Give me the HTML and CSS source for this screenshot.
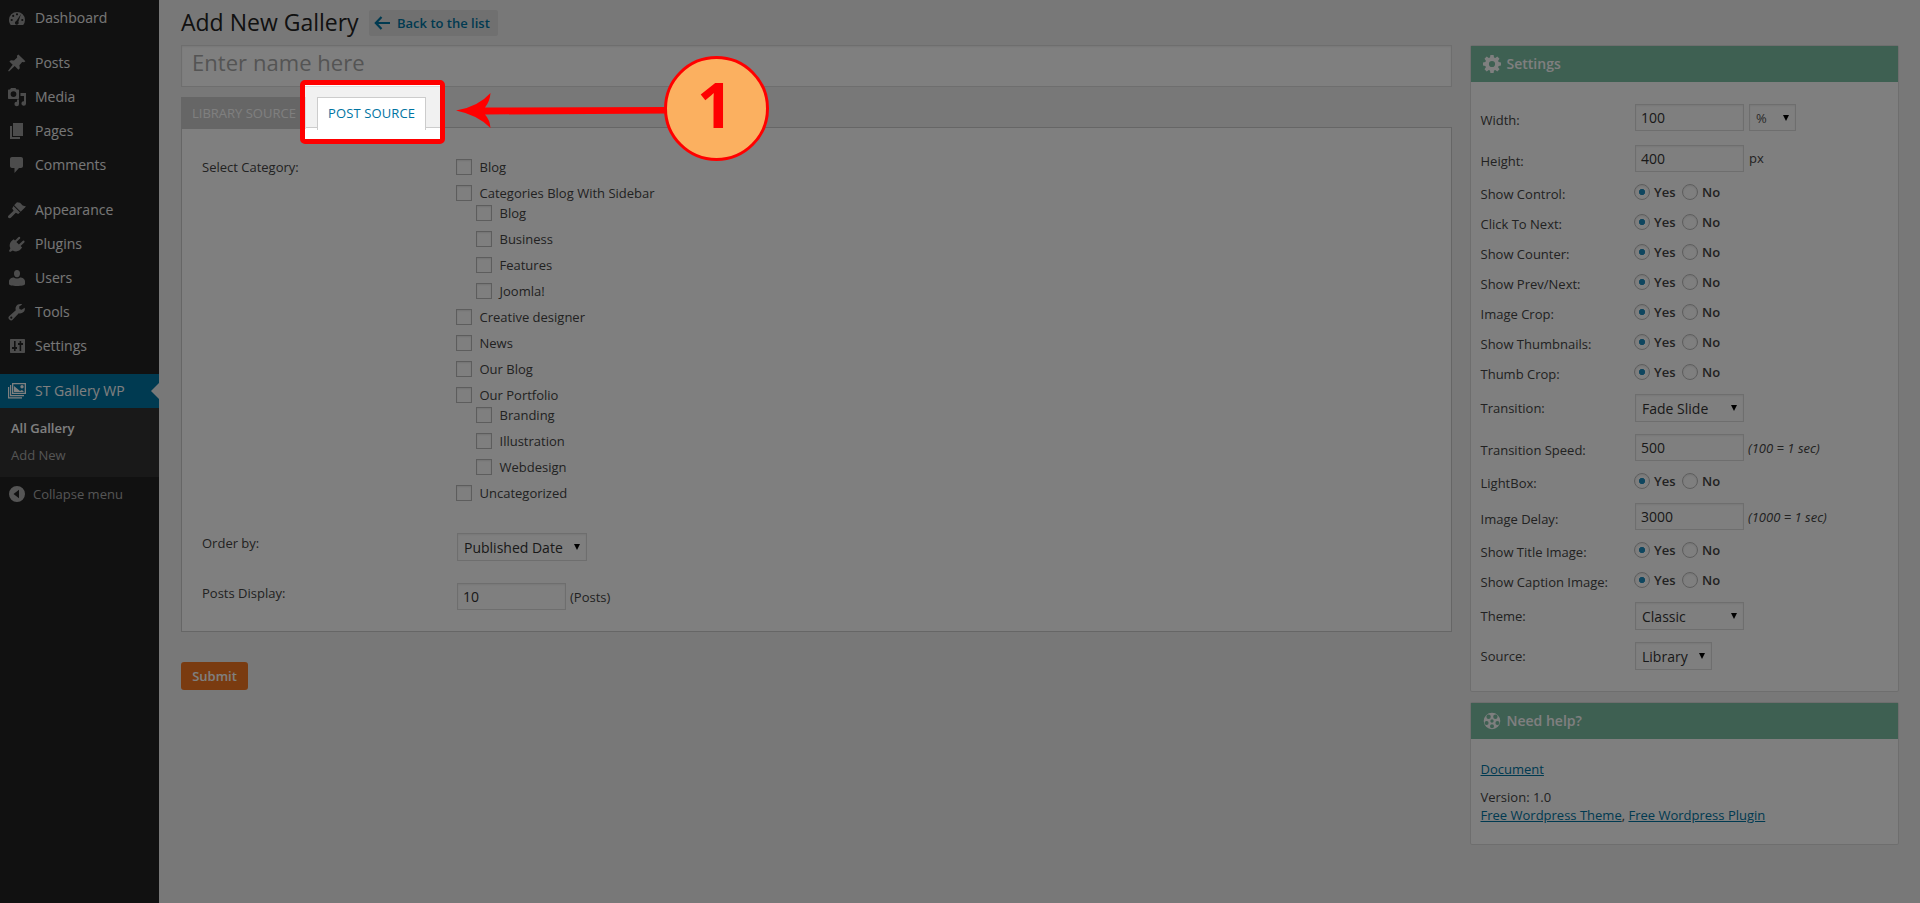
FILE: index.html
```html
<!DOCTYPE html>
<html lang="en">
<head>
<meta charset="utf-8">
<title>Add New Gallery</title>
<link rel="stylesheet" href="styles.css">
</head>
<body>
<div class="app">
  <nav class="menu">
    <a class="item"><svg class="ico" viewBox="0 0 20 20"><path fill-rule="evenodd" d="M3.800 17h12.400A8.200 8.200 0 0 0 18 12a8 8 0 1 0-16 0c0 1.900.7 3.700 1.800 5zM10 5.200a1.100 1.100 0 1 1 0 2.200 1.100 1.100 0 0 1 0-2.200zM6.200 6.800a1.100 1.100 0 1 1 0 2.200 1.100 1.100 0 0 1 0-2.200zM4.700 10.900a1.100 1.100 0 1 1 0 2.200 1.100 1.100 0 0 1 0-2.200zM15.300 10.900a1.100 1.100 0 1 1 0 2.200 1.100 1.100 0 0 1 0-2.200zM14 6l-2.600 7.800a1.900 1.900 0 1 1-2.100-.8z"/></svg>Dashboard</a>
    <a class="item gap"><svg class="ico" viewBox="0 0 20 20"><path d="M11.400 1.600l7 6.600-1.300 1-1.900-.3-2.800 3.300.4 3-1.400 1.500-3.700-3.800L2 18.600l-.9-.9 4.600-5.900-3.300-3.200 1.500-1.400 3.100.4 3.200-3-.3-1.900z"/></svg>Posts</a>
    <a class="item"><svg class="ico" viewBox="0 0 20 20"><path fill-rule="evenodd" d="M4 1h4.500l1 1.500H11c.6 0 1 .4 1 1V11c0 .6-.4 1-1 1H2c-.6 0-1-.4-1-1V3.500c0-.6.400-1 1-1h1zM6.500 4.200a2.900 2.900 0 1 0 0 5.800 2.900 2.900 0 0 0 0-5.800zM13.500 6H19v10.500a2.300 2.300 0 1 1-2-2.300V9h-3.500zM12 12.500v4.500a2.300 2.300 0 1 1-2-2.300v-2.200z"/></svg>Media</a>
    <a class="item"><svg class="ico" viewBox="0 0 20 20"><path d="M6 2h10v13H6zM3 5h2v11h8v2H3z"/></svg>Pages</a>
    <a class="item"><svg class="ico" viewBox="0 0 20 20"><path d="M5 2h9c1.100 0 2 .9 2 2v7c0 1.100-.9 2-2 2h-2l-4.500 5v-5H5c-1.100 0-2-.9-2-2V4c0-1.100.9-2 2-2z"/></svg>Comments</a>
    <a class="item gap"><svg class="ico" viewBox="0 0 20 20"><path d="M8 4.200L10 2.200l3 .6 2.700 2.800L19 6.400l-5.300 5.400-6.500-6.500zM6.500 6l6.500 6.500-1.800 1.400-2.400-1.100-5 5c-.8.700-1.900.6-2.400 0-.6-.7-.5-1.600.2-2.300l5-4.700-1.400-2.300z"/></svg>Appearance</a>
    <a class="item"><svg class="ico" viewBox="0 0 20 20"><path d="M13.100 4.400L9.400 8.100l2.500 2.500 3.700-3.700a1.100 1.100 0 0 1 1.700 1.500l-3.700 3.700 1.500 1.500c-2.700 3.900-6.100 4.700-9.300 2.900L3 18l-1-1 1.400-2.800C1.800 11.200 3 7.600 6.700 5.200l1.300 1.300L11.600 2.900a1.100 1.100 0 0 1 1.500 1.500z"/></svg>Plugins</a>
    <a class="item"><svg class="ico" viewBox="0 0 20 20"><path d="M10 9.300c-2.200 0-3-1.900-3-3.800C7 3.300 8 2 10 2s3 1.300 3 3.500c0 1.900-.8 3.800-3 3.800zM2 16v-2.500C2 11 4.500 9.500 7 9.500c1 1.400 5 1.400 6 0 2.500 0 5 1.500 5 4V16c0 1.300-3.500 2-8 2s-8-.7-8-2z"/></svg>Users</a>
    <a class="item"><svg class="ico" viewBox="0 0 20 20"><path fill-rule="evenodd" d="M17.700 5.700l-3.100 2.100-2.200-.9-.2-2.300 3-2.200c-2.200-1-4.900-.1-6 1.800-.8 1.300-.8 2.700-.4 4L2.600 13.700a2.500 2.500 0 1 0 3.500 3.500l5.700-5.900c1.500.4 3.400.1 4.700-1.200 1.200-1.200 1.700-2.900 1.200-4.400zM4.300 16.800a1.100 1.100 0 1 1 0-2.200 1.100 1.100 0 0 1 0 2.200z"/></svg>Tools</a>
    <a class="item"><svg class="ico" viewBox="0 0 20 20"><path fill-rule="evenodd" d="M4 3h13c.6 0 1 .4 1 1v12c0 .6-.4 1-1 1H4c-.6 0-1-.4-1-1V4c0-.6.4-1 1-1zM7 5v6H5v2h2v2h1.600v-2H10v-2H8.600V5zM12.600 5v2H11v2h1.600v6h1.600V9H16V7h-1.800V5z"/></svg>Settings</a>
    <a class="item gap current"><svg class="ico" viewBox="0 0 20 20"><path fill-rule="evenodd" d="M5 2h14v11H5zM6.300 3.300v8.400h11.400V3.300zM3 4h1.200v10H17v1.200H3zM1 6h1.200v10.300H15v1.200H1z"/><path d="M7 11V5l3 2.500L13 10l2-1 2 2zM15 4a1.700 1.700 0 1 1 0 3.400A1.700 1.700 0 0 1 15 4z"/></svg>ST Gallery WP</a>
    <div class="sub"><a class="on">All Gallery</a><a>Add New</a></div>
    <a class="collapse"><svg class="ico" viewBox="0 0 20 20"><path fill-rule="evenodd" d="M10 2a8 8 0 1 1 0 16 8 8 0 0 1 0-16zM12 5.700L6.500 10l5.500 4.300z"/></svg>Collapse menu</a>
  </nav>

  <main class="page">
    <section class="left">
      <header class="head"><h1>Add New Gallery</h1><a class="back"><svg width="16" height="14" viewBox="0 0 16 14"><path d="M7.500 1L1.800 7l5.700 6M2 7h14" fill="none" stroke="currentColor" stroke-width="2.200"/></svg>Back to the list</a></header>
      <div class="name">Enter name here</div>
      <div class="tabs"><a class="tab">LIBRARY SOURCE</a><a class="tab active">POST SOURCE</a></div>
      <div class="panel">
        <div class="field cats">
          <span class="lab">Select Category:</span>
          <ul>
            <li><i class="cb"></i>Blog</li>
            <li class="parent"><i class="cb"></i>Categories Blog With Sidebar</li>
            <li class="child"><i class="cb"></i>Blog</li>
            <li class="child"><i class="cb"></i>Business</li>
            <li class="child"><i class="cb"></i>Features</li>
            <li class="child"><i class="cb"></i>Joomla!</li>
            <li><i class="cb"></i>Creative designer</li>
            <li><i class="cb"></i>News</li>
            <li><i class="cb"></i>Our Blog</li>
            <li class="parent"><i class="cb"></i>Our Portfolio</li>
            <li class="child"><i class="cb"></i>Branding</li>
            <li class="child"><i class="cb"></i>Illustration</li>
            <li class="child"><i class="cb"></i>Webdesign</li>
            <li><i class="cb"></i>Uncategorized</li>
          </ul>
        </div>
        <div class="field order"><span class="lab">Order by:</span><span class="select w130">Published Date</span></div>
        <div class="field posts"><span class="lab">Posts Display:</span><span class="input">10</span><span class="unit">(Posts)</span></div>
      </div>
      <a class="submit">Submit</a>
    </section>

    <aside class="right">
      <section class="box settings">
        <h2><svg width="18" height="18" viewBox="0 0 18 18"><path fill-rule="evenodd" d="M7.400 0h3.200l.4 2.400 1.300.5 2-1.400 2.200 2.200-1.400 2 .5 1.300 2.400.4v3.200l-2.400.4-.5 1.300 1.400 2-2.200 2.200-2-1.400-1.300.5-.4 2.400H7.400L7 15.600l-1.300-.5-2 1.400-2.200-2.200 1.400-2L2.400 11 0 10.600V7.400L2.400 7l.5-1.300-1.400-2 2.200-2.200 2 1.400L7 2.400zM9 5.900a3.100 3.100 0 1 0 0 6.200 3.100 3.100 0 0 0 0-6.200z"/></svg>Settings</h2>
        <div class="rows">
          <div class="row first"><span class="lab">Width:</span><span class="input">100</span><span class="select pct">%</span></div>
          <div class="row"><span class="lab">Height:</span><span class="input">400</span><span class="unit">px</span></div>
          <div class="row radio"><span class="lab">Show Control:</span><i class="rb on"></i><b>Yes</b><i class="rb"></i><b>No</b></div>
          <div class="row radio"><span class="lab">Click To Next:</span><i class="rb on"></i><b>Yes</b><i class="rb"></i><b>No</b></div>
          <div class="row radio"><span class="lab">Show Counter:</span><i class="rb on"></i><b>Yes</b><i class="rb"></i><b>No</b></div>
          <div class="row radio"><span class="lab">Show Prev/Next:</span><i class="rb on"></i><b>Yes</b><i class="rb"></i><b>No</b></div>
          <div class="row radio"><span class="lab">Image Crop:</span><i class="rb on"></i><b>Yes</b><i class="rb"></i><b>No</b></div>
          <div class="row radio"><span class="lab">Show Thumbnails:</span><i class="rb on"></i><b>Yes</b><i class="rb"></i><b>No</b></div>
          <div class="row radio"><span class="lab">Thumb Crop:</span><i class="rb on"></i><b>Yes</b><i class="rb"></i><b>No</b></div>
          <div class="row sel"><span class="lab">Transition:</span><span class="select w109">Fade Slide</span></div>
          <div class="row"><span class="lab">Transition Speed:</span><span class="input">500</span><em class="unit">(100 = 1 sec)</em></div>
          <div class="row radio"><span class="lab">LightBox:</span><i class="rb on"></i><b>Yes</b><i class="rb"></i><b>No</b></div>
          <div class="row"><span class="lab">Image Delay:</span><span class="input">3000</span><em class="unit">(1000 = 1 sec)</em></div>
          <div class="row radio"><span class="lab">Show Title Image:</span><i class="rb on"></i><b>Yes</b><i class="rb"></i><b>No</b></div>
          <div class="row radio"><span class="lab">Show Caption Image:</span><i class="rb on"></i><b>Yes</b><i class="rb"></i><b>No</b></div>
          <div class="row sel"><span class="lab">Theme:</span><span class="select w109">Classic</span></div>
          <div class="row sel"><span class="lab">Source:</span><span class="select w77">Library</span></div>
        </div>
      </section>
      <section class="box help">
        <h2><svg width="18" height="18" viewBox="0 0 18 18"><path fill-rule="evenodd" d="M9 .7a8.300 8.300 0 1 1 0 16.600A8.300 8.300 0 0 1 9 .7zM9 7.300a1.700 1.700 0 1 0 0 3.400 1.700 1.700 0 0 0 0-3.400zM5.600 2.500a2.200 2.200 0 1 0 0 4.400 2.200 2.200 0 0 0 0-4.400zM12.400 2.500a2.200 2.200 0 1 0 0 4.400 2.200 2.200 0 0 0 0-4.400zM3.600 8.900a2 2 0 1 0 0 4 2 2 0 0 0 0-4zM14.400 8.900a2 2 0 1 0 0 4 2 2 0 0 0 0-4zM9 12.300a2 2 0 1 0 0 4 2 2 0 0 0 0-4z"/></svg>Need help?</h2>
        <div class="links"><p><a>Document</a></p><p>Version: 1.0<br><a>Free Wordpress Theme</a>, <a>Free Wordpress Plugin</a></p></div>
      </section>
    </aside>
  </main>

  <div class="spotlight"></div>
  <svg class="pointer" width="216" height="36" viewBox="0 0 216 36"><path d="M0 17.500Q22 14 34.500 0Q34 8 29 14.500L216 14v6.500L29 21.500Q34 27 34.500 35Q22 22 0 17.500z" fill="red"/></svg>
  <div class="step">1</div>
</div>
</body>
</html>
```
FILE: styles.css
```css
* { box-sizing: border-box; }
body { margin: 0; background: #f1f1f1; color: #444; font: 13px/18px "Open Sans", sans-serif; }
h1, h2, p, ul { margin: 0; padding: 0; }
.app { position: relative; display: flex; width: 1920px; height: 903px; overflow: hidden; }

/* Admin menu */
.menu { width: 159px; background: #222; padding-top: 1px; flex: none; }
.item { display: flex; align-items: center; height: 34px; padding-left: 7px; font-size: 14px; color: #eee; }
.ico { width: 20px; height: 20px; margin-right: 8px; fill: #999; flex: none; }
.gap { margin-top: 11px; }
.current { position: relative; background: #0074a2; color: #fff; }
.current .ico { fill: #fff; }
.current::after { content: ""; position: absolute; right: 0; top: 9px; border: 8px solid transparent; border-left: 0; border-right-color: #f1f1f1; }
.sub { height: 69px; background: #333; padding: 7px 11px; }
.sub a { display: block; height: 27px; line-height: 26px; color: #aaa; }
.sub .on { color: #fff; font-weight: 600; }
.collapse { display: flex; align-items: center; height: 34px; padding-left: 7px; color: #aaa; }
.collapse .ico { margin-right: 6px; fill: #aaa; }

/* Content columns */
.page { flex: 1; display: flex; gap: 18px; padding-left: 22px; }
.left { width: 1271px; }
.head { display: flex; align-items: flex-start; height: 45px; padding-top: 9px; }
h1 { font-size: 23px; line-height: 26px; font-weight: 400; color: #222; width: 178px; white-space: nowrap; margin-right: 10px; }
.back { display: flex; align-items: center; height: 26px; width: 129px; margin-top: 1px; padding-left: 5px; background: #e0e0e0; border-radius: 2px; color: #0074a2; font-weight: 600; white-space: nowrap; }
.back svg { margin-right: 7px; }
.name { height: 42px; border: 1px solid #ddd; background: #fff; box-shadow: inset 0 1px 2px rgba(0,0,0,.07); padding-left: 10px; font-size: 22px; letter-spacing: .05px; line-height: 32px; color: #a9a9a9; }
.tabs { display: flex; gap: 11px; height: 40px; padding-top: 10px; }
.tab { height: 32px; width: 125px; padding-left: 11px; line-height: 33px; background: #ccc; border-right: 1px solid #ddd; color: #fff; white-space: nowrap; position: relative; }
.active { width: 109px; height: 33px; padding-left: 10px; background: #fff; border: 1px solid #ccc; border-bottom: 0; color: #0074a2; line-height: 30px; font-weight: 500; letter-spacing: .12px; }
.panel { height: 505px; border: 1px solid #ccc; background: #fff; padding: 31px 20px 0; }
.field { display: flex; align-items: flex-start; }
.field .lab { width: 255px; flex: none; }
.cats .lab { margin-top: -1px; }
ul { list-style: none; margin-left: -1px; }
li { display: flex; align-items: center; height: 16px; margin-bottom: 10px; }
.parent { margin-bottom: 4px; }
.child { padding-left: 20px; }
.cb { width: 16px; height: 16px; border: 1px solid #bbb; background: #fff; box-shadow: inset 0 1px 2px rgba(0,0,0,.1); margin-right: 7.5px; }
.order { margin-top: 22px; }
.posts { margin-top: 22px; }
.order .lab, .posts .lab { padding-top: 1px; }
.posts .unit { padding-top: 1px; margin-left: 4px; }
.input { width: 109px; height: 27px; border: 1px solid #ddd; background: #fff; box-shadow: inset 0 1px 2px rgba(0,0,0,.07); font-size: 14px; line-height: 26px; padding-left: 5px; color: #333; }
.unit { line-height: 27px; margin-left: 5px; }
em.unit { margin-left: 4px; padding-top: 1px; }
.select { position: relative; height: 28px; border: 1px solid #ddd; background: #fff; box-shadow: inset 0 1px 2px rgba(0,0,0,.07); font-size: 14px; line-height: 28px; padding-left: 6px; color: #333; white-space: nowrap; }
.select::after { content: ""; position: absolute; right: 6px; top: 10px; border: 3px solid transparent; border-top: 6px solid #000; border-bottom: 0; }
.w130 { width: 130px; }
.w109 { width: 109px; }
.w77 { width: 77px; }
.pct { width: 47px; height: 27px; line-height: 26px; margin-left: 5px; font-size: 13px; color: #555; }
.submit { display: block; width: 67px; height: 28px; margin-top: 30px; border-radius: 3px; background: #f47721; color: #fff; font-weight: 600; line-height: 28px; text-align: center; }

/* Side boxes */
.right { width: 429px; padding-top: 45px; }
.box { border: 1px solid #ddd; background: #fff; border-radius: 2px; }
.box h2 { display: flex; align-items: center; height: 36px; padding-left: 12px; background: #7cc0a5; color: #fff; font-size: 14px; font-weight: 600; }
.box h2 svg { fill: #fff; margin-right: 5.5px; }
.settings { height: 647px; }
.help { height: 143px; margin-top: 10px; }
.rows { padding: 22px 9.5px 0; }
.row { display: flex; height: 27px; margin-bottom: 12px; }
.row .lab { width: 154.5px; line-height: 27px; margin-top: 3px; flex: none; }
.first { margin-bottom: 14px; }
.radio { height: 16px; margin-bottom: 14px; }
.row.radio .lab { width: 153.5px; line-height: 16px; margin-top: 2px; }
.radio b { font-weight: 600; line-height: 17px; margin-left: 4px; width: 28px; }
.sel { height: 28px; }
.row.sel .lab { line-height: 28px; margin-top: 0; }
.rb { width: 16px; height: 16px; border: 1px solid #bbb; border-radius: 50%; background: #fff; box-shadow: inset 0 1px 2px rgba(0,0,0,.1); }
.rb.on { background: radial-gradient(circle, #1e8cbe 2.8px, #fff 3.4px); }
.rb ~ .rb + b { margin-left: 4px; }
.links { padding: 21px 9.5px 0; }
.links p { margin-bottom: 10px; }
.links a { color: #0074a2; text-decoration: underline; }

/* Tutorial highlight */
.spotlight { position: absolute; left: 305px; top: 85px; width: 135px; height: 54px; box-shadow: 0 0 0 2200px rgba(0,0,0,.5); }
.spotlight::after { content: ""; position: absolute; inset: -5px; border: 5px solid red; border-radius: 5px; }
.pointer { position: absolute; left: 456px; top: 93px; }
.step { position: absolute; left: 664px; top: 56px; width: 105px; height: 105px; border: 3px solid red; border-radius: 50%; background: #fbb060; color: red; font: 700 63px/90px "Open Sans", sans-serif; text-align: center; padding-right: 3px; }
```
